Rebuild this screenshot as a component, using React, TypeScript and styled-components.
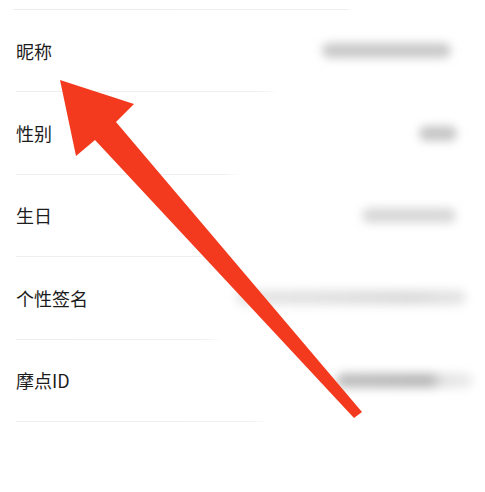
import React from "react";
import styled, { createGlobalStyle } from "styled-components";

const Global = createGlobalStyle`
  html, body { margin: 0; padding: 0; background: #ffffff; }
  body { font-family: "Noto Sans CJK SC", "Noto Sans", sans-serif; }
`;

const Page = styled.div`
  position: relative;
  width: 485px;
  height: 492px;
  overflow: hidden;
  background: #ffffff;
`;

const TopRule = styled.div`
  height: 10px;
  margin-left: 13px;
  border-bottom: 1px solid;
  border-image: linear-gradient(to right, #ececec 0%, #ededed 70%, rgba(238,238,238,0) 72%) 1;
  box-sizing: border-box;
`;

const List = styled.div`
  display: flex;
  flex-direction: column;
`;

const Row = styled.div<{ $rule: number }>`
  display: flex;
  align-items: center;
  justify-content: space-between;
  height: 82.4px;
  margin-left: 16px;
  box-sizing: border-box;
  border-bottom: 1px solid;
  border-image: linear-gradient(
      to right,
      #eeeeee 0%,
      #efefef ${(p) => p.$rule}%,
      rgba(240, 240, 240, 0) ${(p) => p.$rule + 4}%
    )
    1;
`;

const Label = styled.span`
  font-size: 18px;
  color: #1c1c1c;
  letter-spacing: 0;
  line-height: 1;
`;

const Blur = styled.span<{ $w: number; $mr: number; $bg: string }>`
  display: block;
  width: ${(p) => p.$w}px;
  height: 15px;
  margin-right: ${(p) => p.$mr}px;
  border-radius: 8px;
  background: ${(p) => p.$bg};
  filter: blur(5px);
`;

const Overlay = styled.svg`
  position: absolute;
  left: 0;
  top: 0;
  pointer-events: none;
`;

const rows = [
  { label: "昵称", w: 129, mr: 34, bg: "#c9c9c9", rule: 52 },
  { label: "性别", w: 38, mr: 28, bg: "#c6c6c6", rule: 44 },
  { label: "生日", w: 94, mr: 29, bg: "#d8d8d8", rule: 39 },
  { label: "个性签名", w: 230, mr: 19, bg: "linear-gradient(to right, #e6e6e6 0%, #e2e2e2 40%, #dcdcdc 75%, #e6e6e6 100%)", rule: 40 },
  { label: "摩点ID", w: 137, mr: 12, bg: "linear-gradient(to right, #c0c0c0 0%, #bababa 68%, #e4e4e4 78%, #ececec 100%)", rule: 50 },
];

export default function App() {
  return (
    <Page>
      <Global />
      <TopRule />
      <List>
        {rows.map((r) => (
          <Row key={r.label} $rule={r.rule}>
            <Label>{r.label}</Label>
            <Blur $w={r.w} $mr={r.mr} $bg={r.bg} />
          </Row>
        ))}
      </List>
      <Overlay width="485" height="492" viewBox="0 0 485 492">
        <polygon
          points="60,80 134,104 116,122 362,412 354,418 95,140 76,156"
          fill="#f43a1e"
        />
      </Overlay>
    </Page>
  );
}
